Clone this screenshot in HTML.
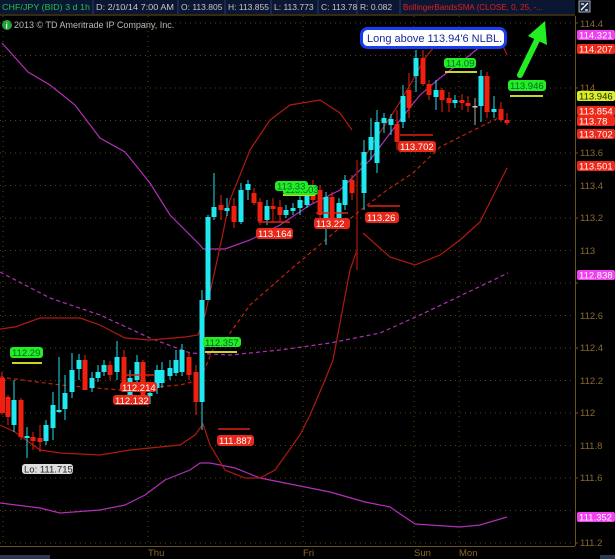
<!DOCTYPE html>
<html><head><meta charset="utf-8"><style>
html,body{margin:0;padding:0;background:#000;width:615px;height:559px;overflow:hidden}
svg{display:block}
text{font-family:"Liberation Sans",sans-serif}
</style></head><body>
<svg width="615" height="559" viewBox="0 0 615 559" xmlns="http://www.w3.org/2000/svg">
<rect width="615" height="559" fill="#000"/>
<rect x="0" y="0" width="575" height="14" fill="#0b1633"/>
<g stroke="#2a3f6a" stroke-width="1">
<line x1="93" y1="0" x2="93" y2="14"/><line x1="178" y1="0" x2="178" y2="14"/><line x1="225" y1="0" x2="225" y2="14"/><line x1="271" y1="0" x2="271" y2="14"/><line x1="318" y1="0" x2="318" y2="14"/><line x1="357" y1="0" x2="357" y2="14"/><line x1="400" y1="0" x2="400" y2="14"/>
</g>
<line x1="0" y1="15" x2="575" y2="15" stroke="#6b5320" stroke-width="1"/>
<g font-size="8.5" fill="#c8c8c8">
<text x="2" y="10" fill="#22c04a" textLength="88" lengthAdjust="spacingAndGlyphs">CHF/JPY (BID) 3 d 1h</text>
<text x="96" y="10" textLength="78" lengthAdjust="spacingAndGlyphs">D: 2/10/14 7:00 AM</text>
<text x="181" y="10">O: 113.805</text>
<text x="228" y="10">H: 113.855</text>
<text x="274" y="10">L: 113.773</text>
<text x="321" y="10">C: 113.78</text>
<text x="360" y="10">R: 0.082</text>
<text x="403" y="10" fill="#e02020" textLength="140" lengthAdjust="spacingAndGlyphs">BollingerBandsSMA (CLOSE, 0, 25, -...</text>
</g>
<rect x="579" y="1" width="11" height="11" fill="#1a2a44" stroke="#aab" stroke-width="1"/>
<path d="M581 10 L588 3 M581 4 L584 4 M585 10 L588 10" stroke="#fff" stroke-width="1.3" fill="none"/>
<circle cx="7" cy="25" r="5" fill="#1fa83a"/>
<text x="5.5" y="28.5" font-size="8" fill="#fff" font-weight="bold">i</text>
<text x="14" y="28" font-size="9" fill="#bbb">2013 © TD Ameritrade IP Company, Inc.</text>
<g stroke="#5a4210" stroke-width="1" stroke-dasharray="1,4">
<line x1="0" y1="23" x2="575" y2="23"/><line x1="0" y1="55.5" x2="575" y2="55.5"/><line x1="0" y1="88" x2="575" y2="88"/><line x1="0" y1="120.5" x2="575" y2="120.5"/><line x1="0" y1="153" x2="575" y2="153"/><line x1="0" y1="185.5" x2="575" y2="185.5"/><line x1="0" y1="218" x2="575" y2="218"/><line x1="0" y1="250.5" x2="575" y2="250.5"/><line x1="0" y1="283" x2="575" y2="283"/><line x1="0" y1="315.5" x2="575" y2="315.5"/><line x1="0" y1="348" x2="575" y2="348"/><line x1="0" y1="380.5" x2="575" y2="380.5"/><line x1="0" y1="413" x2="575" y2="413"/><line x1="0" y1="445.5" x2="575" y2="445.5"/><line x1="0" y1="478" x2="575" y2="478"/><line x1="0" y1="510.5" x2="575" y2="510.5"/><line x1="0" y1="543" x2="575" y2="543"/>
<line x1="3" y1="16" x2="3" y2="546"/><line x1="148" y1="16" x2="148" y2="546"/><line x1="303" y1="16" x2="303" y2="546"/><line x1="414" y1="16" x2="414" y2="546"/><line x1="459" y1="16" x2="459" y2="546"/>
</g>
<line x1="575.5" y1="16" x2="575.5" y2="546" stroke="#6b5320"/>
<line x1="0" y1="546.5" x2="575" y2="546.5" stroke="#6b5320"/>
<g font-size="9.5" fill="#8a6a2c">
<text x="580" y="27">114.4</text><text x="580" y="91">114</text><text x="580" y="156">113.6</text><text x="580" y="189">113.4</text><text x="580" y="221">113.2</text><text x="580" y="254">113</text><text x="580" y="319">112.6</text><text x="580" y="351">112.4</text><text x="580" y="384">112.2</text><text x="580" y="416">112</text><text x="580" y="449">111.8</text><text x="580" y="481">111.6</text><text x="580" y="546">111.2</text>
<text x="148" y="556">Thu</text><text x="303" y="556">Fri</text><text x="414" y="556">Sun</text><text x="459" y="556">Mon</text>
</g>
<g stroke="#6b5320"><line x1="575" y1="23" x2="578" y2="23"/><line x1="575" y1="88" x2="578" y2="88"/><line x1="575" y1="153" x2="578" y2="153"/><line x1="575" y1="218" x2="578" y2="218"/><line x1="575" y1="283" x2="578" y2="283"/><line x1="575" y1="348" x2="578" y2="348"/><line x1="575" y1="413" x2="578" y2="413"/><line x1="575" y1="478" x2="578" y2="478"/><line x1="575" y1="543" x2="578" y2="543"/></g>
<rect x="0" y="555" width="50" height="4" fill="#2a3a55"/><rect x="600" y="555" width="15" height="4" fill="#2a3a55"/>
<polyline fill="none" stroke="#b030b8" stroke-width="1.2" points="2,43 28,72 50,85 75,105 100,138 125,152 150,183 170,215 200,245 203,249 225,249 250,240 280,225 310,205 340,190 370,160 400,120 420,95 440,78 470,55 500,30"/>
<polyline fill="none" stroke="#b030b8" stroke-width="1.2" points="0,503 40,508 60,513 100,510 125,505 145,495 165,480 190,470 200,463 210,463 235,468 260,478 300,486 330,492 365,502 390,507 415,524 460,527 480,525 507,517"/>
<polyline fill="none" stroke="#b030b8" stroke-width="1.2" stroke-dasharray="4,3" points="0,272 50,298 100,315 150,338 190,353 230,355 280,350 330,343 380,333 420,315 460,296 508,273"/>
<polyline fill="none" stroke="#b01a10" stroke-width="1.2" points="0,329 15,327 40,318 80,318 100,325 125,338 150,340 185,337 198,335 205,315 215,270 230,200 250,150 270,120 290,105 320,100 340,113 352,130"/>
<polyline fill="none" stroke="#b01a10" stroke-width="1.2" points="360,165 375,140 395,110 410,85 425,58 440,40 460,28"/>
<polyline fill="none" stroke="#b01a10" stroke-width="1.2" points="497,32 507,55"/>
<polyline fill="none" stroke="#b01a10" stroke-width="1.2" points="0,425 15,432 40,450 60,453 100,455 130,450 160,447 180,445 195,435 203,424 210,445 225,470 245,478 260,478 275,470 300,435 310,415 325,380 333,360 350,270 357,250"/>
<line x1="357" y1="160" x2="357" y2="270" stroke="#8a1208" stroke-width="1.5"/>
<polyline fill="none" stroke="#b01a10" stroke-width="1.2" points="363,233 390,257 415,265 440,255 460,240 480,222 507,168"/>
<polyline fill="none" stroke="#c02010" stroke-width="1.2" stroke-dasharray="4,3" points="0,377 60,385 120,390 180,385 200,380 215,345 223,343 250,305 290,270 323,242 357,213 387,190 413,173 440,147 500,117"/>
<!-- wicks -->
<g stroke-width="1">
<g stroke="#f02010">
<line x1="2" y1="372" x2="2" y2="415"/><line x1="8" y1="395" x2="8" y2="425"/><line x1="21" y1="398" x2="21" y2="440"/><line x1="33" y1="432" x2="33" y2="450"/><line x1="40" y1="425" x2="40" y2="452"/><line x1="85" y1="355" x2="85" y2="390"/><line x1="110" y1="361" x2="110" y2="380"/><line x1="124" y1="350" x2="124" y2="392"/><line x1="143" y1="360" x2="143" y2="400"/><line x1="189" y1="352" x2="189" y2="380"/><line x1="196" y1="365" x2="196" y2="415"/><line x1="221" y1="195" x2="221" y2="220"/><line x1="234" y1="198" x2="234" y2="228"/><line x1="254" y1="188" x2="254" y2="205"/><line x1="260" y1="198" x2="260" y2="225"/><line x1="273" y1="198" x2="273" y2="222"/><line x1="280" y1="200" x2="280" y2="222"/><line x1="313" y1="180" x2="313" y2="203"/><line x1="320" y1="185" x2="320" y2="218"/><line x1="332" y1="192" x2="332" y2="220"/><line x1="352" y1="175" x2="352" y2="200"/><line x1="397" y1="110" x2="397" y2="150"/><line x1="409" y1="73" x2="409" y2="118"/><line x1="423" y1="50" x2="423" y2="86"/><line x1="429" y1="80" x2="429" y2="100"/><line x1="442" y1="88" x2="442" y2="112"/><line x1="449" y1="92" x2="449" y2="112"/><line x1="462" y1="94" x2="462" y2="110"/><line x1="468" y1="96" x2="468" y2="112"/><line x1="487" y1="72" x2="487" y2="118"/><line x1="501" y1="102" x2="501" y2="122"/><line x1="507" y1="113" x2="507" y2="125"/>
</g>
<g stroke="#20e0ec">
<line x1="14" y1="380" x2="14" y2="432"/><line x1="27" y1="427" x2="27" y2="458"/><line x1="46" y1="420" x2="46" y2="445"/><line x1="53" y1="392" x2="53" y2="440"/><line x1="59" y1="357" x2="59" y2="413"/><line x1="65" y1="375" x2="65" y2="420"/><line x1="72" y1="353" x2="72" y2="398"/><line x1="79" y1="354" x2="79" y2="380"/><line x1="92" y1="372" x2="92" y2="392"/><line x1="98" y1="365" x2="98" y2="382"/><line x1="104" y1="360" x2="104" y2="376"/><line x1="117" y1="341" x2="117" y2="380"/><line x1="130" y1="370" x2="130" y2="400"/><line x1="137" y1="355" x2="137" y2="385"/><line x1="150" y1="388" x2="150" y2="404"/><line x1="157" y1="365" x2="157" y2="394"/><line x1="162" y1="362" x2="162" y2="388"/><line x1="170" y1="360" x2="170" y2="380"/><line x1="176" y1="350" x2="176" y2="376"/><line x1="182" y1="344" x2="182" y2="376"/><line x1="202" y1="290" x2="202" y2="430"/><line x1="208" y1="215" x2="208" y2="300"/><line x1="214" y1="173" x2="214" y2="220"/><line x1="227" y1="198" x2="227" y2="216"/><line x1="241" y1="183" x2="241" y2="224"/><line x1="248" y1="180" x2="248" y2="200"/><line x1="267" y1="200" x2="267" y2="225"/><line x1="286" y1="205" x2="286" y2="218"/><line x1="293" y1="203" x2="293" y2="215"/><line x1="300" y1="193" x2="300" y2="215"/><line x1="307" y1="185" x2="307" y2="208"/><line x1="326" y1="192" x2="326" y2="245"/><line x1="339" y1="198" x2="339" y2="222"/><line x1="345" y1="175" x2="345" y2="210"/><line x1="364" y1="140" x2="364" y2="210"/><line x1="371" y1="118" x2="371" y2="160"/><line x1="377" y1="110" x2="377" y2="173"/><line x1="384" y1="113" x2="384" y2="133"/><line x1="391" y1="114" x2="391" y2="135"/><line x1="403" y1="85" x2="403" y2="128"/><line x1="416" y1="50" x2="416" y2="92"/><line x1="436" y1="80" x2="436" y2="110"/><line x1="455" y1="95" x2="455" y2="108"/><line x1="481" y1="70" x2="481" y2="122"/><line x1="494" y1="96" x2="494" y2="118"/>
</g>
<line x1="475" y1="98" x2="475" y2="125" stroke="#aaa"/>
</g>
<!-- bodies -->
<g fill="#f02010">
<rect x="0" y="378" width="5" height="35"/><rect x="5.5" y="397" width="5" height="20"/><rect x="18.5" y="400" width="5" height="37"/><rect x="30.5" y="437" width="5" height="4"/><rect x="37.5" y="438" width="5" height="4"/><rect x="82.5" y="360" width="5" height="30"/><rect x="107.5" y="365" width="5" height="10"/><rect x="121.5" y="357" width="5" height="33"/><rect x="140.5" y="362" width="5" height="33"/><rect x="186.5" y="357" width="5" height="18"/><rect x="193.5" y="372" width="5" height="30"/><rect x="218.5" y="205" width="5" height="5"/><rect x="231.5" y="206" width="5" height="16"/><rect x="251.5" y="193" width="5" height="10"/><rect x="257.5" y="202" width="5" height="19"/><rect x="270.5" y="206" width="5" height="3"/><rect x="277.5" y="207" width="5" height="8"/><rect x="310.5" y="185" width="5" height="15"/><rect x="317.5" y="190" width="5" height="25"/><rect x="329.5" y="197" width="5" height="21"/><rect x="349.5" y="180" width="5" height="13"/><rect x="394.5" y="124" width="5" height="18"/><rect x="406.5" y="90" width="5" height="18"/><rect x="420.5" y="58" width="5" height="26"/><rect x="426.5" y="84" width="5" height="11"/><rect x="439.5" y="90" width="5" height="10"/><rect x="446.5" y="98" width="5" height="5"/><rect x="459.5" y="100" width="5" height="3"/><rect x="465.5" y="103" width="5" height="3"/><rect x="484.5" y="76" width="5" height="36"/><rect x="498.5" y="109" width="5" height="11"/><rect x="504.5" y="120" width="5" height="3"/>
</g>
<g fill="#20e8f0">
<rect x="11.5" y="400" width="5" height="25"/><rect x="24.5" y="436" width="5" height="2"/><rect x="43.5" y="425" width="5" height="16"/><rect x="50.5" y="405" width="5" height="23"/><rect x="56.5" y="410" width="5" height="2"/><rect x="62.5" y="393" width="5" height="16"/><rect x="69.5" y="370" width="5" height="22"/><rect x="76.5" y="360" width="5" height="9"/><rect x="89.5" y="378" width="5" height="10"/><rect x="95.5" y="372" width="5" height="6"/><rect x="101.5" y="365" width="5" height="7"/><rect x="114.5" y="357" width="5" height="15"/><rect x="127.5" y="378" width="5" height="20"/><rect x="134.5" y="362" width="5" height="18"/><rect x="147.5" y="393" width="5" height="3"/><rect x="154.5" y="370" width="5" height="18"/><rect x="159.5" y="370" width="5" height="13"/><rect x="167.5" y="368" width="5" height="8"/><rect x="173.5" y="360" width="5" height="13"/><rect x="179.5" y="350" width="5" height="22"/><rect x="199.5" y="300" width="5" height="102"/><rect x="205.5" y="217" width="5" height="83"/><rect x="211.5" y="207" width="5" height="10"/><rect x="224.5" y="208" width="5" height="3"/><rect x="238.5" y="190" width="5" height="32"/><rect x="245.5" y="184" width="5" height="6"/><rect x="264.5" y="206" width="5" height="14"/><rect x="283.5" y="210" width="5" height="5"/><rect x="290.5" y="208" width="5" height="3"/><rect x="297.5" y="200" width="5" height="8"/><rect x="304.5" y="190" width="5" height="15"/><rect x="323.5" y="197" width="5" height="21"/><rect x="336.5" y="203" width="5" height="15"/><rect x="342.5" y="180" width="5" height="25"/><rect x="361.5" y="152" width="5" height="41"/><rect x="368.5" y="137" width="5" height="13"/><rect x="374.5" y="122" width="5" height="41"/><rect x="381.5" y="118" width="5" height="5"/><rect x="388.5" y="119" width="5" height="6"/><rect x="400.5" y="96" width="5" height="26"/><rect x="413.5" y="58" width="5" height="18"/><rect x="433.5" y="90" width="5" height="7"/><rect x="452.5" y="100" width="5" height="3"/><rect x="478.5" y="76" width="5" height="30"/><rect x="491.5" y="109" width="5" height="3"/>
</g>
<rect x="472.5" y="106" width="5" height="1.5" fill="#ccc"/>
<g font-size="9.5">
<line x1="12" y1="363" x2="42" y2="363" stroke="#c8d820" stroke-width="2"/>
<rect x="10" y="347" width="33" height="11" rx="3" fill="#22ee22"/><text x="12" y="356" fill="#063">112.29</text>
<line x1="205" y1="352" x2="237" y2="352" stroke="#c8d820" stroke-width="2"/>
<rect x="203" y="337" width="38" height="10" rx="3" fill="#22ee22"/><text x="205" y="346" fill="#063">112.357</text>
<line x1="122" y1="375" x2="155" y2="375" stroke="#e02010" stroke-width="1.5"/>
<rect x="120" y="382" width="37" height="10" rx="3" fill="#e82818"/><text x="122" y="391" fill="#fff">112.214</text>
<rect x="113" y="395" width="37" height="10" rx="3" fill="#e82818"/><text x="115" y="404" fill="#fff">112.132</text>
<line x1="218" y1="429" x2="250" y2="429" stroke="#e02010" stroke-width="1.5"/>
<rect x="217" y="435" width="37" height="11" rx="3" fill="#e82818"/><text x="219" y="444" fill="#fff">111.887</text>
<rect x="22" y="464" width="51" height="10" rx="3" fill="#ddd"/><text x="24" y="472.5" fill="#222">Lo: 111.715</text>
<line x1="258" y1="222" x2="290" y2="222" stroke="#e02010" stroke-width="1.5"/>
<rect x="256" y="228" width="37" height="11" rx="3" fill="#e82818"/><text x="258" y="237" fill="#fff">113.164</text>
<line x1="283" y1="195" x2="315" y2="195" stroke="#c8d820" stroke-width="2"/>
<rect x="283" y="185" width="35" height="10" rx="3" fill="#22ee22"/><text x="285" y="193" fill="#063">113.503</text>
<rect x="275" y="181" width="33" height="10" rx="3" fill="#22ee22"/><text x="277" y="189.5" fill="#063">113.33</text>
<line x1="316" y1="213" x2="348" y2="213" stroke="#e02010" stroke-width="1.5"/>
<rect x="314" y="218" width="36" height="11" rx="3" fill="#e82818"/><text x="316" y="227" fill="#fff">113.22</text>
<line x1="368" y1="206" x2="400" y2="206" stroke="#e02010" stroke-width="1.5"/>
<rect x="365" y="212" width="34" height="11" rx="3" fill="#e82818"/><text x="367" y="221" fill="#fff">113.26</text>
<line x1="400" y1="135" x2="433" y2="135" stroke="#e02010" stroke-width="1.5"/>
<rect x="398" y="141" width="38" height="11" rx="3" fill="#e82818"/><text x="400" y="150" fill="#fff">113.702</text>
<line x1="445" y1="72" x2="477" y2="72" stroke="#c8d820" stroke-width="2"/>
<rect x="444" y="58" width="32" height="10" rx="3" fill="#22ee22"/><text x="446" y="66.5" fill="#063">114.09</text>
<line x1="510" y1="96" x2="543" y2="96" stroke="#c8d820" stroke-width="2"/>
<rect x="508" y="80" width="38" height="11" rx="3" fill="#22ee22"/><text x="510" y="89" fill="#063">113.946</text>
</g>
<rect x="361.5" y="28.5" width="144" height="19" rx="6" fill="#fff" stroke="#1a3cf0" stroke-width="3"/>
<text x="367" y="42" font-size="11" fill="#1a2a9a">Long above 113.94'6 NLBL.</text>
<line x1="520" y1="75" x2="538" y2="38" stroke="#22ee22" stroke-width="6" stroke-linecap="round"/>
<polygon points="545,21 547,45 528,36" fill="#22ee22"/>
<g font-size="9.5">
<rect x="577" y="30" width="38" height="10" rx="2" fill="#f040f0"/><text x="579" y="38.5" fill="#fff">114.321</text>
<rect x="577" y="44" width="38" height="10" rx="2" fill="#f02818"/><text x="579" y="52.5" fill="#fff">114.207</text>
<rect x="577" y="91" width="38" height="10" rx="2" fill="#d8f020"/><text x="579" y="99.5" fill="#222">113.946</text>
<rect x="577" y="106" width="38" height="10" rx="2" fill="#f02818"/><text x="579" y="114.5" fill="#fff">113.854</text>
<rect x="577" y="116" width="38" height="10" rx="2" fill="#f02818"/><text x="579" y="124.5" fill="#fff">113.78</text>
<rect x="577" y="129" width="38" height="10" rx="2" fill="#f02818"/><text x="579" y="137.5" fill="#fff">113.702</text>
<rect x="577" y="161" width="38" height="10" rx="2" fill="#f02818"/><text x="579" y="169.5" fill="#fff">113.501</text>
<rect x="577" y="270" width="38" height="10" rx="2" fill="#f040f0"/><text x="579" y="278.5" fill="#fff">112.838</text>
<rect x="577" y="512" width="38" height="10" rx="2" fill="#f040f0"/><text x="579" y="520.5" fill="#fff">111.352</text>
</g>
</svg>
</body></html>
